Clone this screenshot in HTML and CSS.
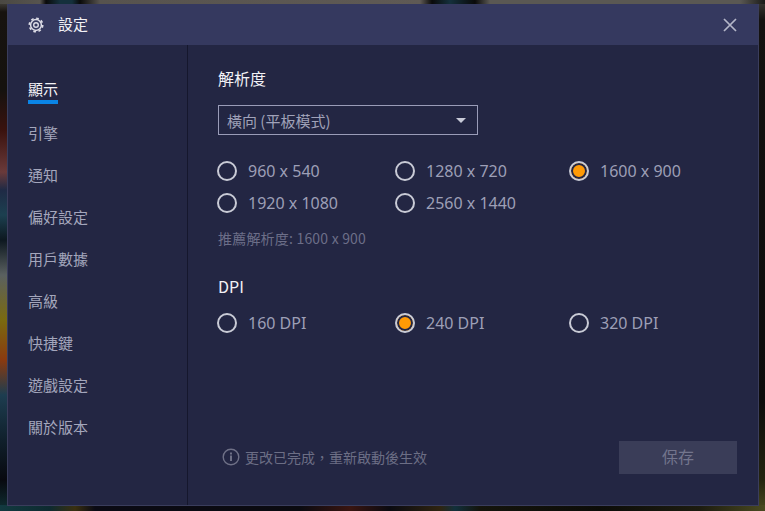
FILE: index.html
```html
<!DOCTYPE html>
<html lang="zh-Hant">
<head>
<meta charset="utf-8">
<title>設定</title>
<link rel="stylesheet" href="styles.css">
</head>
<body>
<div class="dialog">
  <header class="titlebar">
    <svg class="gear" viewBox="0 0 16 16" width="16" height="16"><circle cx="8" cy="8" r="5.400" fill="none" stroke="#dcdce6" stroke-width="1.500"/><circle cx="8" cy="8" r="6.700" fill="none" stroke="#dcdce6" stroke-width="1.700" stroke-dasharray="2.630 2.630"/><circle cx="8" cy="8" r="2.300" fill="none" stroke="#dcdce6" stroke-width="1.400"/></svg>
    <span class="title">設定</span>
    <svg class="close" viewBox="0 0 14 14" width="14" height="14"><path d="M1 1l12 12M13 1L1 13" stroke="#b4b6c8" stroke-width="1.700" fill="none"/></svg>
  </header>
  <div class="body">
    <nav class="side">
      <a class="item active">顯示</a>
      <a class="item">引擎</a>
      <a class="item">通知</a>
      <a class="item">偏好設定</a>
      <a class="item">用戶數據</a>
      <a class="item">高級</a>
      <a class="item">快捷鍵</a>
      <a class="item">遊戲設定</a>
      <a class="item">關於版本</a>
    </nav>
    <main class="content">
      <h2 class="heading">解析度</h2>
      <div class="select"><span>橫向 (平板模式)</span><i class="caret"></i></div>
      <div class="radios res">
        <label class="radio"><i class="dot"></i>960 x 540</label>
        <label class="radio"><i class="dot"></i>1280 x 720</label>
        <label class="radio on"><i class="dot"></i>1600 x 900</label>
        <label class="radio"><i class="dot"></i>1920 x 1080</label>
        <label class="radio"><i class="dot"></i>2560 x 1440</label>
      </div>
      <p class="hint">推薦解析度: 1600 x 900</p>
      <h2 class="heading dpi">DPI</h2>
      <div class="radios dpi-list">
        <label class="radio"><i class="dot"></i>160 DPI</label>
        <label class="radio on"><i class="dot"></i>240 DPI</label>
        <label class="radio"><i class="dot"></i>320 DPI</label>
      </div>
      <footer class="foot">
        <div class="note">
          <svg viewBox="0 0 18 18" width="18" height="18"><circle cx="9" cy="9" r="7.800" fill="none" stroke="#6f7187" stroke-width="1.400"/><rect x="8" y="7.500" width="2" height="5.500" fill="#6f7187"/><rect x="8" y="4.500" width="2" height="2" fill="#6f7187"/></svg>
          <span>更改已完成，重新啟動後生效</span>
        </div>
        <button class="save">保存</button>
      </footer>
    </main>
  </div>
</div>
</body>
</html>
```
FILE: styles.css
```css
* { box-sizing: border-box; }
html, body { margin: 0; height: 100%; }
body {
  width: 765px; height: 511px; overflow: hidden;
  padding: 4px 6px 5px 7px;
  background-color: #0c0b0c;
  background-repeat: no-repeat;
  background-size: 100% 4px, 100% 6px, 7px 100%, 6px 100%;
  background-position: 0 0, 0 100%, 0 0, 100% 0;
  background-image:
    linear-gradient(90deg, #4a4842 0, #57544f 40px, #0a0a0a 46px, #14303c 60px, #14303c 72px, #0a0a0a 80px, #57534e 100px, #5f5a55 420px, #0a0a0a 432px, #14303c 450px, #0a0a0a 475px, #5a5853 490px, #5a5853 740px, #1a1a18 765px),
    linear-gradient(90deg, #123a40 0, #0e2a30 50px, #3a3010 75px, #0a0a14 95px, #0a0a10 300px, #3a1510 350px, #0a0a10 390px, #2f2410 440px, #12303c 455px, #14140c 480px, #0c0c08 600px, #1d1c10 700px, #4a4a20 765px),
    linear-gradient(180deg, #4c4a44 0, #17130f 12px, #15120f 90px, #3a120e 130px, #6a3a3a 172px, #1f2a45 190px, #1c4050 215px, #0d1820 240px, #5a6060 275px, #7a6a10 320px, #8a3a10 360px, #1d3d50 395px, #10202c 440px, #08090f 480px, #0f3034 511px),
    linear-gradient(180deg, #3c3a35 0, #141210 20px, #0d0c0c 400px, #24240f 480px, #4a4a20 511px);
  font-family: "Noto Sans CJK TC", "Noto Sans", sans-serif;
}
.dialog {
  width: 752px; height: 502px;
  display: flex; flex-direction: column;
  background: #232643;
  border-left: 1px solid #3a3d5c;
  border-right: 1px solid #3a3d5c;
  border-bottom: 1px solid #3a3d5c;
}
.titlebar {
  height: 41px; flex: none;
  display: flex; align-items: center;
  background: #35395f;
  padding: 0 21px 0 20px;
}
.gear { margin-right: 14px; }
.title { color: #f2f2f6; font-size: 15px; margin-bottom: 3px; }
.close { margin-left: auto; margin-top: 1px; }
.body { flex: 1; display: flex; min-height: 0; }
.side {
  width: 180px; flex: none;
  border-right: 1px solid #15172d;
  padding: 34px 0 0 20px;
  display: flex; flex-direction: column;
}
.item {
  height: 42px; width: max-content;
  color: #a4a6bc; font-size: 15px; line-height: 20px;
}
.item.active { color: #f2f2f6; height: 44px; }
.item.active::after {
  content: ""; display: block; width: 30px; height: 4px;
  margin-top: 1px; background: #0a84e6;
}
.content {
  flex: 1; position: relative;
  padding: 22px 21px 0 30px;
  display: flex; flex-direction: column;
}
.heading { margin: 0; color: #f2f2f6; font-size: 16px; font-weight: 400; line-height: 22px; }
.select {
  margin-top: 16px;
  width: 260px; height: 30px;
  border: 1px solid #9a9cb8;
  display: flex; align-items: center; justify-content: space-between;
  padding: 0 11px 0 8px;
  color: #a0a2b9; font-size: 15px;
}
.caret { width: 0; height: 0; border: 5px solid transparent; border-top-color: #c8cad8; border-bottom: 0; }
.radios {
  margin-top: 26px;
  display: grid; grid-template-columns: 178px 174px 1fr;
  row-gap: 12px;
}
.radios.dpi-list { margin-top: 16px; }
.radio {
  display: flex; align-items: center; height: 20px;
  color: #9d9fb6; font: 16px "Noto Sans", sans-serif;
}
.dot {
  width: 20px; height: 20px; border-radius: 50%;
  border: 2px solid #c9cbd6; margin: 0 11px 0 -1px; flex: none;
}
.on .dot { background: #ff9a05; box-shadow: inset 0 0 0 2px #232643; }
.hint { margin: 16px 0 0; color: #6c6e88; font-size: 14px; line-height: 18px; letter-spacing: .2px; }
.heading.dpi { margin-top: 28px; }
.foot {
  position: absolute; left: 34px; right: 21px; bottom: 31px;
  display: flex; align-items: center; justify-content: space-between;
}
.note { display: flex; align-items: center; gap: 5px; color: #6c6e85; font-size: 14px; margin-bottom: 2px; }
.save {
  width: 118px; height: 33px; border: 0; padding: 0 0 3px;
  background: #3a3d58; color: #73758d;
  font: 16px "Noto Sans CJK TC", sans-serif;
}
```
